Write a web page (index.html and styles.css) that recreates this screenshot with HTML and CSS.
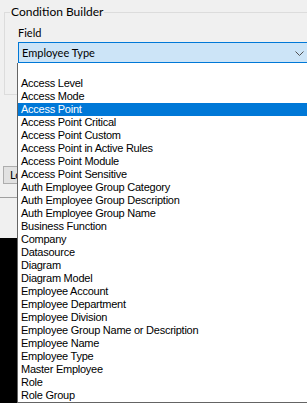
FILE: index.html
```html
<!DOCTYPE html>
<html lang="en">
<head>
    <meta charset="UTF-8">
    <meta name="viewport" content="width=device-width, initial-scale=1.0">
    <title>Condition Builder</title>
    <link rel="stylesheet" href="styles.css">
</head>
<body>

    <div class="window">

        <!-- Condition Builder group -->
        <fieldset class="group">
            <legend>Condition Builder</legend>
            <div class="label">Field</div>
            <div class="combo">
                <span class="combo-text">Employee Type</span>
                <svg class="chevron" width="9" height="5" viewBox="0 0 9 5">
                    <polyline points="0.5,0.5 4.5,4.5 8.5,0.5" fill="none" stroke="#505050" stroke-width="1"/>
                </svg>
            </div>
        </fieldset>

        <!-- Buttons under the group (mostly hidden by the open list) -->
        <div class="actions">
            <button class="btn">Lo</button>
        </div>

        <div class="divider"></div>

        <!-- Output area -->
        <div class="console"></div>

        <!-- Open dropdown list -->
        <ul class="dropdown">
            <li>&nbsp;</li>
            <li>Access Level</li>
            <li>Access Mode</li>
            <li class="selected">Access Point</li>
            <li>Access Point Critical</li>
            <li>Access Point Custom</li>
            <li>Access Point in Active Rules</li>
            <li>Access Point Module</li>
            <li>Access Point Sensitive</li>
            <li>Auth Employee Group Category</li>
            <li>Auth Employee Group Description</li>
            <li>Auth Employee Group Name</li>
            <li>Business Function</li>
            <li>Company</li>
            <li>Datasource</li>
            <li>Diagram</li>
            <li>Diagram Model</li>
            <li>Employee Account</li>
            <li>Employee Department</li>
            <li>Employee Division</li>
            <li>Employee Group Name or Description</li>
            <li>Employee Name</li>
            <li>Employee Type</li>
            <li>Master Employee</li>
            <li>Role</li>
            <li>Role Group</li>
        </ul>

    </div>

</body>
</html>
```

FILE: styles.css
```css
html, body {
    margin: 0;
    padding: 0;
    overflow: hidden;
}

body {
    font-family: "Lato", "Liberation Sans", sans-serif;
    font-size: 12px;
    background-color: #f0f0f0;
}

.window {
    position: relative;
    width: 307px;
    height: 403px;
    overflow: hidden;
    display: flex;
    flex-direction: column;
    background-color: #f0f0f0;
}

/* Group box */
.group {
    margin: 5px 0 0 4px;
    width: 330px;
    border: 1px solid #dcdcdc;
    padding: 7px 0 31px 5px;
    box-sizing: border-box;
    flex-shrink: 0;
}

.group legend {
    padding: 0 1px;
    line-height: 14px;
    color: #000;
}

.label {
    margin-left: 8px;
    font-size: 11px;
    line-height: 14px;
}

.combo {
    margin: 2px 0 0 8px;
    width: 300px;
    height: 21px;
    box-sizing: border-box;
    border: 1px solid #0078d7;
    background-color: #cce4f7;
    display: flex;
    align-items: center;
    justify-content: space-between;
    padding: 0 13px 0 3px;
    font-size: 11px;
    line-height: 19px;
}

.chevron {
    display: block;
    margin-top: 1px;
}

/* Buttons */
.actions {
    margin: 71px 0 0 3px;
    flex-shrink: 0;
}

.btn {
    font-family: "Lato", "Liberation Sans", sans-serif;
    font-size: 11px;
    width: 24px;
    height: 18px;
    padding: 0 0 0 6px;
    text-align: left;
    border: 1px solid #adadad;
    background-color: #e1e1e1;
    line-height: 16px;
}

.divider {
    margin-top: 13px;
    height: 1px;
    background-color: #a0a0a0;
    flex-shrink: 0;
}

.console {
    margin-top: 40px;
    flex: 1;
    background-color: #000;
}

/* Dropdown list */
.dropdown {
    position: absolute;
    left: 17px;
    top: 63px;
    width: 310px;
    margin: 0;
    padding: 1px 0 0 0;
    list-style: none;
    background-color: #fff;
    border: 1px solid #646464;
    border-top: none;
    font-family: "Liberation Sans", Arial, sans-serif;
    font-size: 11px;
    letter-spacing: -0.25px;
}

.dropdown li {
    height: 13px;
    line-height: 13px;
    padding-left: 3px;
    white-space: nowrap;
    color: #000;
}

.dropdown li.selected {
    background-color: #0078d7;
    color: #fff;
}
```
